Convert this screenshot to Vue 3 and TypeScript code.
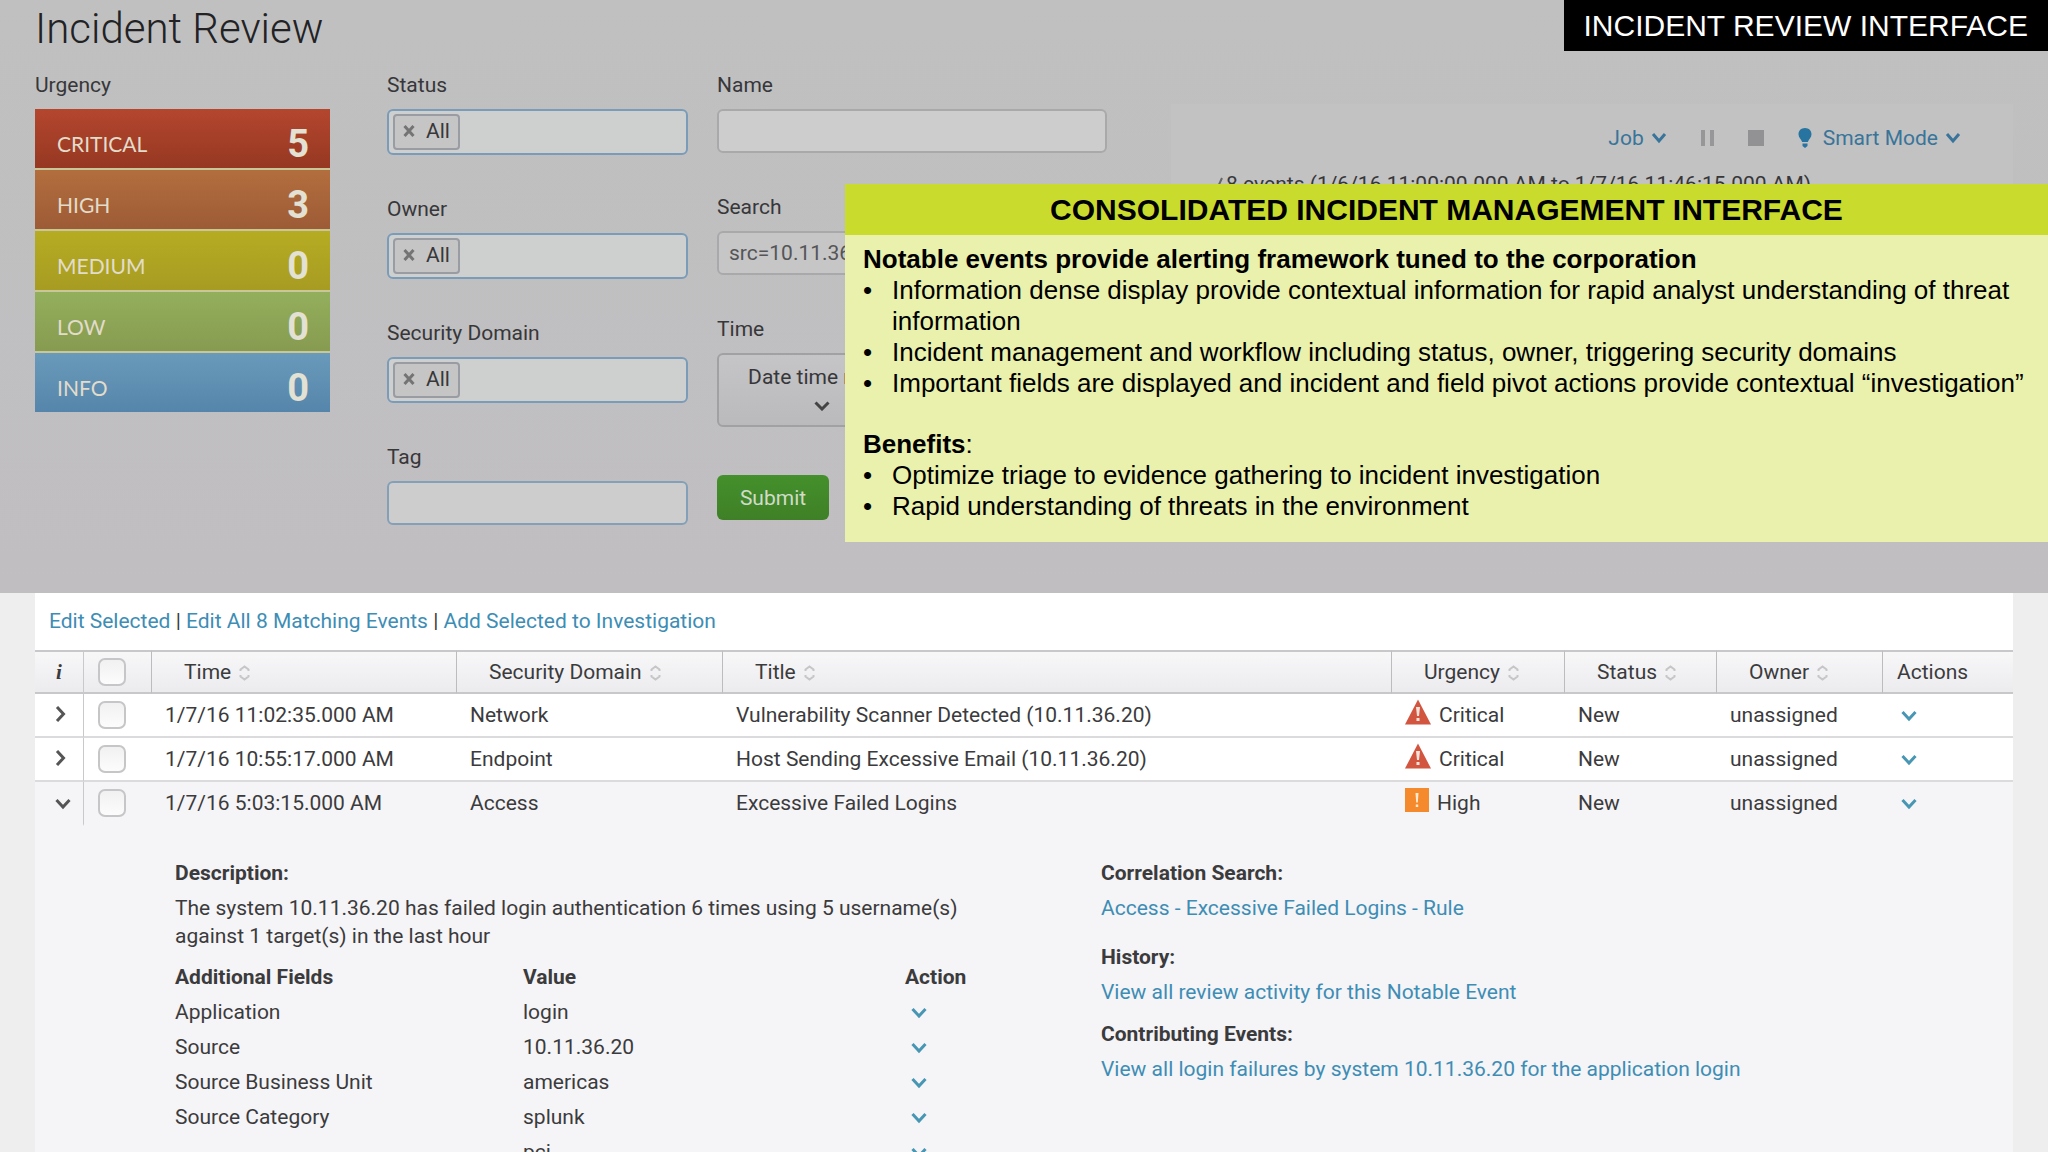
<script setup lang="ts">
interface UrgencyLevel {
  name: string
  count: number
}

interface NotableEvent {
  time: string
  domain: string
  title: string
  urgency: 'Critical' | 'High'
  status: string
  owner: string
  open: boolean
}

const levels: UrgencyLevel[] = [
  { name: 'CRITICAL', count: 5 },
  { name: 'HIGH', count: 3 },
  { name: 'MEDIUM', count: 0 },
  { name: 'LOW', count: 0 },
  { name: 'INFO', count: 0 },
]

const tokenFields: string[] = ['Status', 'Owner', 'Security Domain']

const columns: { key: string; label: string }[] = [
  { key: 'time', label: 'Time' },
  { key: 'domain', label: 'Security Domain' },
  { key: 'title', label: 'Title' },
  { key: 'urgency', label: 'Urgency' },
  { key: 'status', label: 'Status' },
  { key: 'owner', label: 'Owner' },
]

const events: NotableEvent[] = [
  { time: '1/7/16 11:02:35.000 AM', domain: 'Network', title: 'Vulnerability Scanner Detected (10.11.36.20)', urgency: 'Critical', status: 'New', owner: 'unassigned', open: false },
  { time: '1/7/16 10:55:17.000 AM', domain: 'Endpoint', title: 'Host Sending Excessive Email (10.11.36.20)', urgency: 'Critical', status: 'New', owner: 'unassigned', open: false },
  { time: '1/7/16 5:03:15.000 AM', domain: 'Access', title: 'Excessive Failed Logins', urgency: 'High', status: 'New', owner: 'unassigned', open: true },
]

const fields: { name: string; value: string }[] = [
  { name: 'Application', value: 'login' },
  { name: 'Source', value: '10.11.36.20' },
  { name: 'Source Business Unit', value: 'americas' },
  { name: 'Source Category', value: 'splunk' },
  { name: '', value: 'pci' },
]
</script>

<template>
  <div class="page">
    <header class="top">
      <h1>Incident Review</h1>
      <form class="filters" @submit.prevent>
        <section class="urgency-col">
          <h2 class="label">Urgency</h2>
          <ul class="levels">
            <li v-for="l in levels" :key="l.name" :class="l.name.toLowerCase()">
              <span>{{ l.name }}</span><b>{{ l.count }}</b>
            </li>
          </ul>
        </section>

        <div class="token-col">
          <div v-for="f in tokenFields" :key="f">
            <label class="label" :for="'f-' + f">{{ f }}</label>
            <div class="tokens">
              <span class="token">
                <button type="button" :aria-label="'Remove All from ' + f">
                  <svg width="12" height="14" viewBox="0 0 12 14"><path d="M1.5 2l9 10M10.500 2l-9 10" stroke="#747474" stroke-width="3" fill="none" /></svg>
                </button>
                All
              </span>
              <input :id="'f-' + f" type="text" />
            </div>
          </div>
          <div>
            <label class="label" for="tag">Tag</label>
            <input id="tag" class="box blue" type="text" />
          </div>
        </div>

        <div class="text-col">
          <div>
            <label class="label" for="name">Name</label>
            <input id="name" class="box" type="text" />
          </div>
          <div>
            <label class="label" for="search">Search</label>
            <input id="search" class="box grey" type="text" value="src=10.11.36.20" />
          </div>
          <div>
            <label class="label" for="time">Time</label>
            <button id="time" type="button" class="time">
              Date time range
              <svg width="16" height="10" viewBox="0 0 16 10"><path d="M1.500 1.500L8 8l6.500-6.500" stroke="#444" stroke-width="3" fill="none" /></svg>
            </button>
          </div>
          <button type="submit" class="submit">Submit</button>
        </div>

        <section class="job">
          <div class="job-bar">
            <button type="button" class="menu">Job
              <svg width="16" height="12" viewBox="0 0 16 12"><path d="M2 2l6 7 6-7" stroke="#39749a" stroke-width="3" fill="none" /></svg>
            </button>
            <button type="button" aria-label="Pause">
              <svg width="13" height="16" viewBox="0 0 13 16"><path d="M0 0h4v16H0zM9 0h4v16H9z" fill="#979799" /></svg>
            </button>
            <button type="button" aria-label="Stop">
              <svg width="16" height="16" viewBox="0 0 16 16"><path d="M0 0h16v16H0z" fill="#929294" /></svg>
            </button>
            <button type="button" class="menu">
              <svg class="bulb" width="14" height="20" viewBox="0 0 14 20"><path d="M7 0C3 0 .5 2.800.5 6.300c0 3.200 2.600 5 3.700 7.700h5.600c1.100-2.700 3.700-4.500 3.700-7.700C13.500 2.800 11 0 7 0zM4.500 15.500h5V18L7 20l-2.500-2z" fill="#26749f" /></svg>
              Smart Mode
              <svg width="16" height="12" viewBox="0 0 16 12"><path d="M2 2l6 7 6-7" stroke="#39749a" stroke-width="3" fill="none" /></svg>
            </button>
          </div>
          <p class="found">
            <svg width="8" height="18" viewBox="0 0 8 18"><path d="M0 10l2 4L7 3" stroke="#666" stroke-width="2" fill="none" /></svg>
            8 events (1/6/16 11:00:00.000 AM to 1/7/16 11:46:15.000 AM)
          </p>
        </section>
      </form>
    </header>

    <main class="results">
      <nav class="bulk">
        <a href="#">Edit Selected</a> | <a href="#">Edit All 8 Matching Events</a> | <a href="#">Add Selected to Investigation</a>
      </nav>

      <table class="events">
        <colgroup>
          <col class="c-info" /><col class="c-check" /><col class="c-time" /><col class="c-domain" /><col />
          <col class="c-urgency" /><col class="c-status" /><col class="c-owner" /><col class="c-actions" />
        </colgroup>
        <thead>
          <tr>
            <th class="info">i</th>
            <th class="check"><input type="checkbox" aria-label="Select all events" /></th>
            <th v-for="c in columns" :key="c.key" class="sortable">
              {{ c.label }}
              <svg width="11" height="16" viewBox="0 0 11 16"><path d="M1.500 6V4.500l4-3 4 3V6M1.500 10v1.500l4 3 4-3V10" stroke="#c6c6c8" stroke-width="2" fill="none" /></svg>
            </th>
            <th>Actions</th>
          </tr>
        </thead>
        <tbody>
          <tr v-for="e in events" :key="e.time" :class="{ open: e.open }">
            <td class="info">
              <button type="button" :aria-label="'Details of ' + e.title">
                <svg v-if="e.open" width="16" height="12" viewBox="0 0 16 12"><path d="M1.500 2L8 9l6.500-7" stroke="#555" stroke-width="3" fill="none" /></svg>
                <svg v-else width="11" height="16" viewBox="0 0 11 16"><path d="M2 1l6.500 7L2 15" stroke="#555" stroke-width="3" fill="none" /></svg>
              </button>
            </td>
            <td class="check"><input type="checkbox" :aria-label="'Select ' + e.title" /></td>
            <td>{{ e.time }}</td>
            <td>{{ e.domain }}</td>
            <td>{{ e.title }}</td>
            <td>
              <span class="urgency">
                <svg v-if="e.urgency === 'Critical'" width="26" height="26" viewBox="0 0 26 26"><path d="M13 .5L26 25.500H0z" fill="#d2553f" /><path d="M11 8h4l-1 9h-2zM11.500 19h3v3h-3z" fill="#fbe3dc" /></svg>
                <svg v-else width="24" height="24" viewBox="0 0 24 24"><path d="M0 0h24v24H0z" fill="#f58a2c" /><path d="M10.500 5h3l-.7 9.500h-1.600zM10.800 16.500h2.400V19h-2.400z" fill="#ffe9cf" /></svg>
                {{ e.urgency }}
              </span>
            </td>
            <td>{{ e.status }}</td>
            <td>{{ e.owner }}</td>
            <td class="act">
              <button type="button" :aria-label="'Actions for ' + e.title">
                <svg width="16" height="12" viewBox="0 0 16 12"><path d="M1.500 2L8 9l6.500-7" stroke="#4796b4" stroke-width="3" fill="none" /></svg>
              </button>
            </td>
          </tr>
        </tbody>
      </table>

      <div class="detail">
        <div class="about">
          <h3>Description:</h3>
          <p>The system 10.11.36.20 has failed login authentication 6 times using 5 username(s) against 1 target(s) in the last hour</p>
          <table class="fields">
            <thead>
              <tr><th>Additional Fields</th><th>Value</th><th>Action</th></tr>
            </thead>
            <tbody>
              <tr v-for="f in fields" :key="f.value">
                <td>{{ f.name }}</td>
                <td>{{ f.value }}</td>
                <td>
                  <button type="button" :aria-label="'Actions for ' + f.value">
                    <svg width="16" height="12" viewBox="0 0 16 12"><path d="M1.500 2L8 9l6.500-7" stroke="#4796b4" stroke-width="3" fill="none" /></svg>
                  </button>
                </td>
              </tr>
            </tbody>
          </table>
        </div>
        <div class="related">
          <section class="rule">
            <h3>Correlation Search:</h3>
            <a href="#">Access - Excessive Failed Logins - Rule</a>
          </section>
          <section>
            <h3>History:</h3>
            <a href="#">View all review activity for this Notable Event</a>
          </section>
          <section>
            <h3>Contributing Events:</h3>
            <a href="#">View all login failures by system 10.11.36.20 for the application login</a>
          </section>
        </div>
      </div>
    </main>

    <div class="banner">INCIDENT REVIEW INTERFACE</div>

    <aside class="callout">
      <h2>CONSOLIDATED INCIDENT MANAGEMENT INTERFACE</h2>
      <div class="callout-body">
        <p><b>Notable events provide alerting framework tuned to the corporation</b></p>
        <ul>
          <li>Information dense display provide contextual information for rapid analyst understanding of threat information</li>
          <li>Incident management and workflow including status, owner, triggering security domains</li>
          <li>Important fields are displayed and incident and field pivot actions provide contextual “investigation”</li>
        </ul>
        <p class="benefits"><b>Benefits</b>:</p>
        <ul>
          <li>Optimize triage to evidence gathering to incident investigation</li>
          <li>Rapid understanding of threats in the environment</li>
        </ul>
      </div>
    </aside>
  </div>
</template>

<style>
body {
  background: #eeeeef;
}
</style>

<style scoped>
* {
  box-sizing: border-box;
}
.page {
  position: relative;
  height: 100vh;
  overflow: hidden;
  font-family: Roboto, sans-serif;
  font-size: 21px;
  line-height: 28px;
  color: #3b3b3d;
}
h1, h2, h3, p, ul {
  margin: 0;
  padding: 0;
}
ul {
  list-style: none;
}
button, input {
  font: inherit;
  color: inherit;
}
button {
  margin: 0;
  padding: 0;
  border: 0;
  background: none;
}
svg {
  display: block;
  flex: none;
}
a {
  color: #3d8db5;
  text-decoration: none;
}

/* filter area */
.top {
  padding: 0 35px 68px;
  background: linear-gradient(#c0c0c0, #c0bec1);
  color: #37373a;
}
h1 {
  font-size: 42px;
  line-height: 58px;
  font-weight: 300;
  color: #222225;
}
.filters {
  display: flex;
  align-items: flex-start;
  padding-top: 13px;
}
.label {
  display: block;
  margin-bottom: 10px;
  font-size: 21px;
  line-height: 28px;
  font-weight: 400;
}
.urgency-col {
  flex: 0 0 295px;
  margin-right: 57px;
}
.levels {
  display: grid;
  gap: 2px;
  background: #c9c79a;
}
.levels li {
  display: flex;
  align-items: center;
  justify-content: space-between;
  height: 59px;
  padding: 10px 21px 0 22px;
  font-family: Lato, sans-serif;
  font-size: 21px;
  color: #e2dccb;
}
.levels b {
  font-family: Roboto, sans-serif;
  font-size: 38px;
  font-weight: 700;
  color: #e3e1d3;
}
.critical { background: linear-gradient(#b4462e, #963822); }
.high { background: linear-gradient(#b36e3e, #9d5b36); }
.medium { background: linear-gradient(#b6ac22, #a79c22); }
.low { background: linear-gradient(#93af5c, #879b50); }
.levels .info { background: linear-gradient(#6a9aba, #5585aa); }

.token-col {
  display: flex;
  flex: 0 0 301px;
  flex-direction: column;
  gap: 40px;
  min-width: 0;
  margin-right: 29px;
}
.tokens {
  display: flex;
  align-items: center;
  height: 46px;
  padding: 0 4px;
  border: 2px solid #7b9cb8;
  border-radius: 6px;
  background: #cecfcf;
}
.tokens input {
  flex: 1;
  width: 0;
  min-width: 0;
  border: 0;
  background: none;
}
.token {
  display: flex;
  align-items: center;
  gap: 11px;
  height: 36px;
  padding: 0 8px 2px;
  border: 2px solid #9a9ca3;
  border-radius: 4px;
  background: #c6c5c6;
}
.box {
  display: block;
  width: 100%;
  height: 44px;
  padding: 0 10px;
  border: 2px solid #a9a9ab;
  border-radius: 6px;
  background: #cdcdcd;
}
.box.blue {
  border-color: #84a0b8;
}
.box.grey {
  background: #c6c6c7;
  color: #555558;
}
.text-col {
  display: flex;
  flex: 0 0 390px;
  flex-direction: column;
  align-items: flex-start;
  gap: 40px;
  margin-right: 64px;
}
.text-col > div {
  width: 100%;
}
.time {
  display: flex;
  flex-direction: column;
  align-items: center;
  gap: 10px;
  width: 210px;
  height: 74px;
  padding-top: 8px;
  border: 2px solid #a1a1a4;
  border-radius: 6px;
  background: linear-gradient(#c5c4c6, #bab9bc);
}
.submit {
  width: 112px;
  height: 45px;
  margin-top: 8px;
  border-radius: 6px;
  background: linear-gradient(#44902c, #3f8026);
  color: #d0dcc8;
}
.job {
  flex: 1;
  margin-top: 33px;
  padding: 20px 52px 0 44px;
  background: #c2c2c2;
}
.job-bar {
  display: flex;
  align-items: center;
  justify-content: flex-end;
  gap: 34px;
}
.menu {
  display: flex;
  align-items: center;
  gap: 7px;
  color: #39749a;
}
.bulb {
  margin-right: 4px;
}
.found {
  display: flex;
  align-items: center;
  gap: 3px;
  margin-top: 18px;
  white-space: nowrap;
}

/* result list */
.results {
  margin: 0 35px;
  background: #f5f4f6;
}
.bulk {
  padding: 14px 14px 15px;
  background: #fff;
}
.events {
  width: 100%;
  table-layout: fixed;
  border-spacing: 0;
}
.c-info { width: 49px; }
.c-check { width: 68px; }
.c-time { width: 305px; }
.c-domain { width: 266px; }
.c-urgency { width: 173px; }
.c-status { width: 152px; }
.c-owner { width: 166px; }
.c-actions { width: 130px; }
.events th,
.events td {
  height: 44px;
  padding: 0 0 0 13px;
  border-bottom: 2px solid #dbdbdd;
  font-weight: 400;
  text-align: left;
  white-space: nowrap;
}
.events th {
  padding-left: 14px;
  border-top: 2px solid #c8c8ca;
  border-bottom-color: #c8c8ca;
  border-right: 1px solid #bcbcbf;
}
.events th:last-child {
  border-right: 0;
}
.events thead tr {
  background: linear-gradient(#f8f8f9, #ebeaed);
}
.events tbody tr {
  background: #fff;
}
.events tbody tr.open {
  background: #f5f4f6;
}
.events .open td {
  border-bottom-color: transparent;
}
.events th.sortable {
  padding-left: 32px;
}
.sortable svg {
  display: inline-block;
  margin-left: 3px;
  vertical-align: -2px;
}
.events .info {
  padding: 0 0 0 20px;
  border-right: 1px solid #c9c9cb;
}
.events th.info {
  padding-left: 21px;
  font-family: "Liberation Serif", serif;
  font-weight: 700;
  font-style: italic;
}
.events .check {
  padding: 0 0 0 14px;
}
.check input {
  display: block;
  appearance: none;
  width: 28px;
  height: 28px;
  margin: 0;
  border: 2px solid #c6c6c8;
  border-radius: 7px;
  background: linear-gradient(#f1f1f2, #fcfcfc);
}
.urgency {
  display: flex;
  align-items: center;
  gap: 8px;
}
.urgency svg {
  margin-bottom: 6px;
}
.events .act {
  padding-left: 18px;
}

/* expanded event */
.detail {
  display: grid;
  grid-template-columns: 926px 1fr;
  padding: 33px 0 0 140px;
}
h3, .fields th {
  font-size: 21px;
  line-height: 28px;
  font-weight: 700;
  text-align: left;
}
h3 {
  margin-bottom: 7px;
}
.about p {
  width: 810px;
}
.fields {
  width: 810px;
  margin-top: 10px;
  table-layout: fixed;
  border-spacing: 0;
}
.fields th, .fields td {
  height: 35px;
  padding: 0;
  line-height: 35px;
}
.fields th:nth-child(1) { width: 348px; }
.fields th:nth-child(2) { width: 382px; }
.fields td:last-child {
  padding-left: 6px;
}
.related {
  display: flex;
  flex-direction: column;
  gap: 14px;
}
.related a {
  display: block;
}
.rule {
  margin-bottom: 7px;
}

/* slide annotations laid over the screen */
.banner {
  position: absolute;
  top: 0;
  right: 0;
  padding: 0 20px;
  background: #000;
  color: #fff;
  font-family: "Liberation Sans", Arial, sans-serif;
  font-size: 30px;
  line-height: 51px;
}
.callout {
  position: absolute;
  top: 184px;
  left: 845px;
  right: 0;
  background: #eaf1ad;
  color: #000;
  font-family: "Liberation Sans", Arial, sans-serif;
  font-size: 26px;
  line-height: 31px;
}
.callout h2 {
  background: #c9dc2e;
  font-size: 30px;
  line-height: 51px;
  text-align: center;
}
.callout-body {
  padding: 9px 18px 20px;
}
.callout li {
  position: relative;
  padding-left: 29px;
}
.callout li::before {
  content: "•";
  position: absolute;
  left: 0;
}
.benefits {
  margin-top: 30px;
}
</style>
